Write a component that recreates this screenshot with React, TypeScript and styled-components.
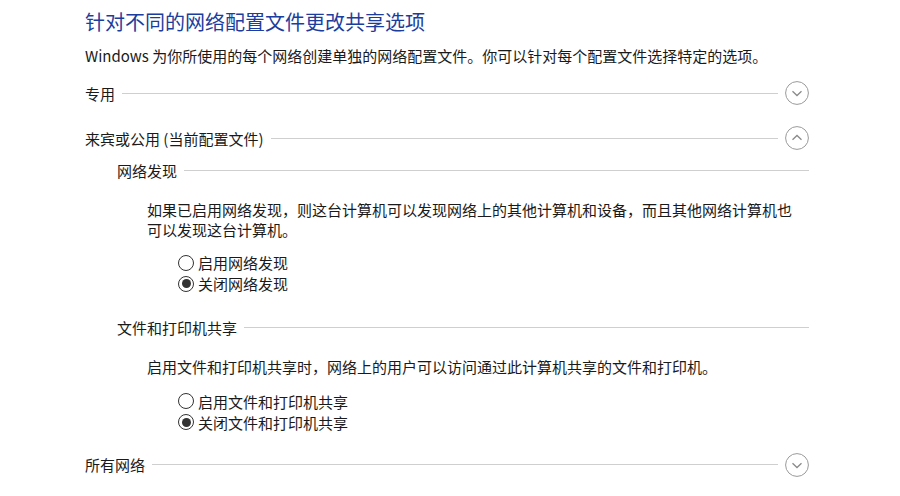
import React, { useState } from 'react';
import styled, { createGlobalStyle } from 'styled-components';

const GlobalStyle = createGlobalStyle`
  html, body {
    margin: 0;
    padding: 0;
    background: #fff;
  }
  body {
    font-family: "Noto Sans CJK SC", "Noto Sans", "Liberation Sans", sans-serif;
    color: #1a1a1a;
  }
`;

const Page = styled.div`
  width: 724px;
  padding: 8px 0 0 85px;
`;

const Title = styled.h1`
  margin: 0;
  font-size: 20px;
  line-height: 28px;
  font-weight: 400;
  color: #1c3d9e;
`;

const Intro = styled.p`
  margin: 10px 0 0;
  font-size: 15px;
  line-height: 20px;
`;

const SectionRow = styled.div<{ $gap: number }>`
  display: flex;
  align-items: center;
  height: 24px;
  margin-top: ${(p) => p.$gap}px;
  font-size: 15px;
`;

const Rule = styled.div`
  flex: 1;
  height: 1px;
  background: #cfcfcf;
  margin-left: 7px;
`;

const ToggleButton = styled.button`
  width: 24px;
  height: 24px;
  padding: 0;
  margin-left: 7px;
  border: none;
  background: none;
  cursor: pointer;
  display: flex;
`;

const GroupHead = styled.div<{ $gap: number }>`
  display: flex;
  align-items: center;
  height: 20px;
  margin: ${(p) => p.$gap}px 0 0 32px;
  font-size: 15px;
`;

const Paragraph = styled.p`
  margin: 20px 0 0 62px;
  width: 650px;
  font-size: 15px;
  line-height: 19.5px;
`;

const RadioList = styled.div<{ $gap: number }>`
  margin: ${(p) => p.$gap}px 0 0 93px;
  display: flex;
  flex-direction: column;
`;

const RadioLabel = styled.label`
  display: flex;
  align-items: center;
  height: 21px;
  font-size: 15px;
  cursor: default;
`;

const RadioDot = styled.span<{ $on: boolean }>`
  width: 16px;
  height: 16px;
  box-sizing: border-box;
  border: 1px solid #333;
  border-radius: 50%;
  margin-right: 4px;
  display: flex;
  align-items: center;
  justify-content: center;

  &::after {
    content: '';
    width: 9px;
    height: 9px;
    border-radius: 50%;
    background: #333;
    display: ${(p) => (p.$on ? 'block' : 'none')};
  }
`;

function Chevron ({ up }: { up: boolean }) {
  return (
    <svg width='24' height='24' viewBox='0 0 24 24'>
      <circle cx='12' cy='12' r='11.4' fill='none' stroke='#9a9a9a' strokeWidth='1' />
      <path
        d={up ? 'M7.5 13.8 L12 9.5 L16.5 13.8' : 'M7.5 10.2 L12 14.5 L16.5 10.2'}
        fill='none'
        stroke='#8a8a8a'
        strokeWidth='1.3'
      />
    </svg>
  );
}

interface RadioGroupProps {
  gap: number;
  options: string[];
}

function RadioGroup ({ gap, options }: RadioGroupProps) {
  const [value, setValue] = useState(1);

  return (
    <RadioList $gap={gap}>
      {options.map((label, i) => (
        <RadioLabel key={label} onClick={() => setValue(i)}>
          <RadioDot $on={value === i} />
          {label}
        </RadioLabel>
      ))}
    </RadioList>
  );
}

function Section ({ gap, label, open }: { gap: number; label: string; open: boolean }) {
  return (
    <SectionRow $gap={gap}>
      {label}
      <Rule />
      <ToggleButton aria-label={label}>
        <Chevron up={open} />
      </ToggleButton>
    </SectionRow>
  );
}

export default function App () {
  return (
    <>
      <GlobalStyle />
      <Page>
        <Title>针对不同的网络配置文件更改共享选项</Title>
        <Intro>Windows 为你所使用的每个网络创建单独的网络配置文件。你可以针对每个配置文件选择特定的选项。</Intro>

        <Section gap={15} label='专用' open={false} />
        <Section gap={21} label='来宾或公用 (当前配置文件)' open />

        <GroupHead $gap={10}>
          网络发现
          <Rule />
        </GroupHead>
        <Paragraph>如果已启用网络发现，则这台计算机可以发现网络上的其他计算机和设备，而且其他网络计算机也可以发现这台计算机。</Paragraph>
        <RadioGroup gap={13} options={['启用网络发现', '关闭网络发现']} />

        <GroupHead $gap={23}>
          文件和打印机共享
          <Rule />
        </GroupHead>
        <Paragraph>启用文件和打印机共享时，网络上的用户可以访问通过此计算机共享的文件和打印机。</Paragraph>
        <RadioGroup gap={14} options={['启用文件和打印机共享', '关闭文件和打印机共享']} />

        <Section gap={20} label='所有网络' open={false} />
      </Page>
    </>
  );
}
